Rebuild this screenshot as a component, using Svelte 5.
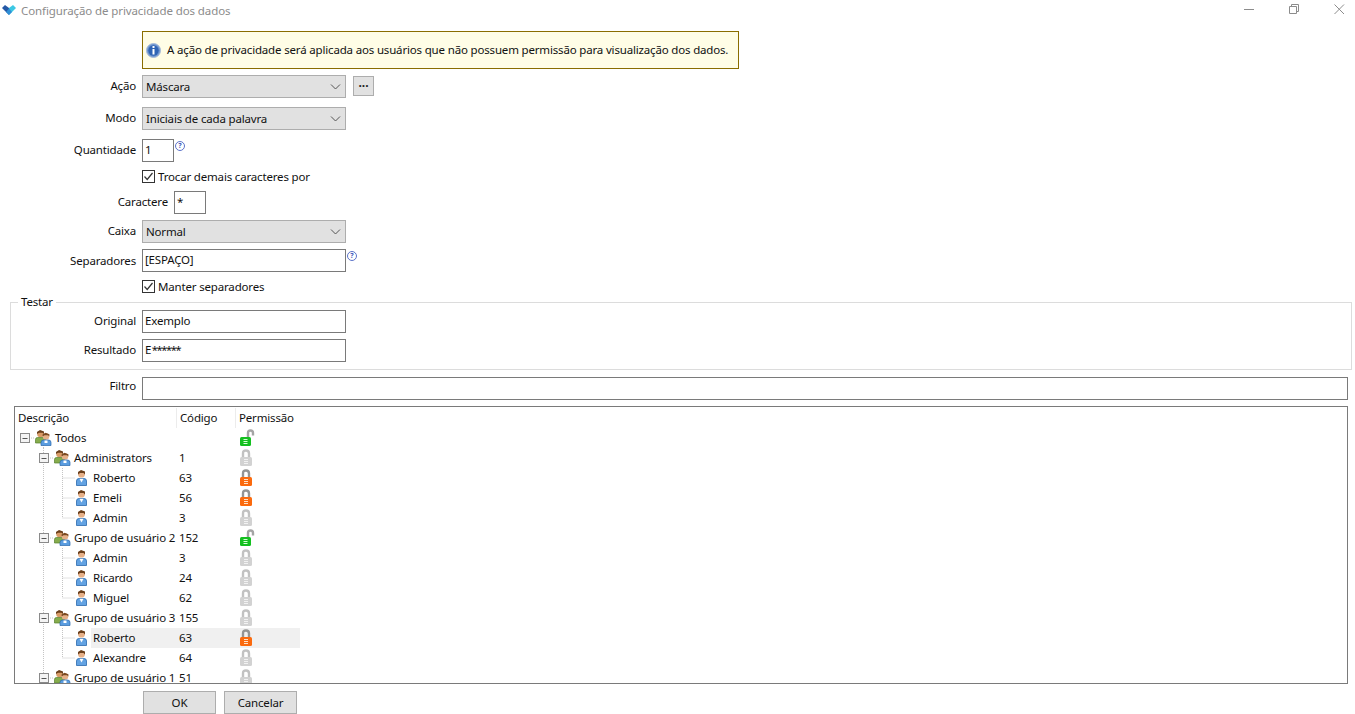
<script>
  const rows = [
    { level: 0, kind: 'group', name: 'Todos', code: '', lock: 'open', lines: [] },
    { level: 1, kind: 'group', name: 'Administrators', code: '1', lock: 'gray', lines: [43] },
    { level: 2, kind: 'user', name: 'Roberto', code: '63', lock: 'orange', lines: [43, 62] },
    { level: 2, kind: 'user', name: 'Emeli', code: '56', lock: 'orange', lines: [43, 62] },
    { level: 2, kind: 'user', name: 'Admin', code: '3', lock: 'gray', lines: [43], last: true },
    { level: 1, kind: 'group', name: 'Grupo de usuário 2', code: '152', lock: 'open', lines: [43] },
    { level: 2, kind: 'user', name: 'Admin', code: '3', lock: 'gray', lines: [43, 62] },
    { level: 2, kind: 'user', name: 'Ricardo', code: '24', lock: 'gray', lines: [43, 62] },
    { level: 2, kind: 'user', name: 'Miguel', code: '62', lock: 'gray', lines: [43], last: true },
    { level: 1, kind: 'group', name: 'Grupo de usuário 3', code: '155', lock: 'gray', lines: [43] },
    { level: 2, kind: 'user', name: 'Roberto', code: '63', lock: 'orange', lines: [43, 62], selected: true },
    { level: 2, kind: 'user', name: 'Alexandre', code: '64', lock: 'gray', lines: [43], last: true },
    { level: 1, kind: 'group', name: 'Grupo de usuário 1', code: '51', lock: 'gray', lines: [43] }
  ];
  const lockColors = {
    gray: ['#d2d2d2', '#f2f2f2', '#c2c2c2'],
    orange: ['#fb6a0e', '#ffe2c8', '#949494'],
    open: ['#14c020', '#d8ffd8', '#a4a4a4']
  };
</script>

<div class="window">
  <header class="titlebar">
    <svg class="logo" width="16" height="12" viewBox="0 0 16 12">
      <path d="M1 4 L4 1 L8 4 L8 11 Z" fill="#2458a6" />
      <path d="M8 4 L12 1 L15 4 L8 11 Z" fill="#3cc8e4" />
      <path d="M5 8 L8 4.5 L11 8 L8 11 Z" fill="#2f8fd6" />
    </svg>
    <span class="title">Configuração de privacidade dos dados</span>
    <div class="controls">
      <svg width="11" height="11" viewBox="0 0 11 11"><path d="M0 5.5H10" stroke="#8c8c8c" fill="none" /></svg>
      <svg width="11" height="11" viewBox="0 0 11 11"><path d="M.5 2.5H7.5V9.5H.5ZM2.5 2.5V.5H9.5V7.5H7.5" stroke="#8c8c8c" fill="none" /></svg>
      <svg width="11" height="11" viewBox="0 0 11 11"><path d="M.5 .5L10 10M10 .5L.5 10" stroke="#8c8c8c" fill="none" /></svg>
    </div>
  </header>

  <main class="content">
    <div class="notice">
      <svg width="15" height="15" viewBox="0 0 15 15">
        <circle cx="7.5" cy="7.5" r="7" fill="#6f96cf" stroke="#a9bcd8" />
        <circle cx="7.5" cy="7.5" r="5.2" fill="#2f64b4" />
        <rect x="6.5" y="3" width="2" height="2" fill="#fff" />
        <rect x="6.5" y="6" width="2" height="5.5" fill="#fff" />
      </svg>
      <span>A ação de privacidade será aplicada aos usuários que não possuem permissão para visualização dos dados.</span>
    </div>

    <div class="row r-acao">
      <label class="lbl">Ação</label>
      <div class="select"><span>Máscara</span><svg width="11" height="6" viewBox="0 0 11 6"><path d="M1 .5L5.5 5L10 .5" stroke="#555" fill="none" /></svg></div>
      <button class="dots">···</button>
    </div>
    <div class="row r-modo">
      <label class="lbl">Modo</label>
      <div class="select"><span>Iniciais de cada palavra</span><svg width="11" height="6" viewBox="0 0 11 6"><path d="M1 .5L5.5 5L10 .5" stroke="#555" fill="none" /></svg></div>
    </div>
    <div class="row r-qtd">
      <label class="lbl">Quantidade</label>
      <div class="input small">1</div>
      <span class="help">?</span>
    </div>
    <div class="check r-trocar">
      <span class="box"><svg width="13" height="13" viewBox="0 0 13 13"><path d="M2.5 6.5L5.2 9.5L10.5 3" stroke="#333" stroke-width="1.2" fill="none" /></svg></span>
      Trocar demais caracteres por
    </div>
    <div class="row r-car">
      <label class="lbl narrow">Caractere</label>
      <div class="input small">*</div>
    </div>
    <div class="row r-caixa">
      <label class="lbl">Caixa</label>
      <div class="select"><span>Normal</span><svg width="11" height="6" viewBox="0 0 11 6"><path d="M1 .5L5.5 5L10 .5" stroke="#555" fill="none" /></svg></div>
    </div>
    <div class="row r-sep">
      <label class="lbl">Separadores</label>
      <div class="input">[ESPAÇO]</div>
      <span class="help">?</span>
    </div>
    <div class="check r-manter">
      <span class="box"><svg width="13" height="13" viewBox="0 0 13 13"><path d="M2.5 6.5L5.2 9.5L10.5 3" stroke="#333" stroke-width="1.2" fill="none" /></svg></span>
      Manter separadores
    </div>

    <fieldset class="testar">
      <legend>Testar</legend>
      <div class="row t-orig">
        <label class="lbl inner">Original</label>
        <div class="input">Exemplo</div>
      </div>
      <div class="row t-res">
        <label class="lbl inner">Resultado</label>
        <div class="input">E<span class="mask">******</span></div>
      </div>
    </fieldset>

    <div class="row r-filtro">
      <label class="lbl">Filtro</label>
      <div class="input wide"></div>
    </div>

    <section class="tree">
      <div class="thead">
        <span class="th c-desc">Descrição</span>
        <span class="th c-code">Código</span>
        <span class="th c-perm">Permissão</span>
      </div>
      {#each rows as r}
        <div class="tr">
          <svg class="guides" width="100" height="20" viewBox="0 0 100 20">
            {#each r.lines as x}
              <path d="M{x - 14.5} 0V20" class="dot" />
            {/each}
            {#if r.last}
              <path d="M47.5 0V10" class="dot" />
            {/if}
            {#if r.level === 2}
              <path d="M47.5 10H60" class="dot" />
            {:else}
              <path d="M{r.level === 0 ? 14 : 33} 10H{r.level === 0 ? 20 : 39}" class="dot" />
              {#if r.level === 0}<path d="M28.5 15V20" class="dot" />{/if}
              <rect x={r.level === 0 ? 5.5 : 24.5} y="5.5" width="9" height="9" fill="#f4f4f4" stroke="#8a8a8a" />
              <path d="M{r.level === 0 ? 7.5 : 26.5} 10.5H{r.level === 0 ? 12.5 : 31.5}" stroke="#555" />
            {/if}
            {#if r.kind === 'group'}
              <g transform="translate({r.level === 0 ? 20 : 39} 2)">
                <circle cx="5.5" cy="4" r="3.3" fill="#d99a66" />
                <path d="M2 4V2L5 0L9 1.5V4L7.5 2.8H4Z" fill="#6b3f1c" />
                <path d="M.5 13V9.5Q.5 7.5 2.5 7.5H8.5Q10.5 7.5 10.5 9.5V13Z" fill="#86ac4c" stroke="#55802c" stroke-width=".7" />
                <circle cx="11" cy="6.5" r="3.2" fill="#e6b088" />
                <path d="M7.6 6.5V4.5L10.5 2.8L14.4 4.2V6.5L13 5.2H9.5Z" fill="#7a4a22" />
                <path d="M6 15.5V12.5Q6 10 8.5 10H13.5Q16 10 16 12.5V15.5Z" fill="#5b9de0" stroke="#2a68ad" stroke-width=".7" />
                <rect x="9.5" y="10.5" width="3" height="2.5" fill="#fff" />
              </g>
            {:else}
              <g transform="translate(61 2)">
                <circle cx="5.5" cy="4.2" r="3.4" fill="#e6b088" />
                <path d="M2 4.5V2L5 0L9 1.5V4.5L7.5 3H4Z" fill="#6b3f1c" />
                <path d="M.5 15.5V11Q.5 8.5 3 8.5H8Q10.5 8.5 10.5 11V15.5Z" fill="#62a2e2" stroke="#2a68ad" stroke-width=".8" />
                <path d="M3.5 8.8H7.5L5.5 12.5Z" fill="#fff" />
              </g>
            {/if}
          </svg>
          <div class="cells" class:selected={r.selected} class:l0={r.level === 0} class:l1={r.level === 1}>
            <span class="c-name">{r.name}</span>
            <span class="c-code">{r.code}</span>
            <span class="c-lock">
              <svg width="16" height="20" viewBox="0 0 16 20">
                {#if r.lock === 'open'}
                  <path d="M8 9V5Q8 2.5 10.5 2.5Q13 2.5 13 5V7.5" stroke={lockColors.open[2]} stroke-width="2.4" fill="none" />
                  <rect x="0" y="9" width="11" height="9" rx="1.5" fill={lockColors.open[0]} />
                  <path d="M3.5 11.5H7.5M3.5 13.5H7.5M3.5 15.5H7.5" stroke={lockColors.open[1]} />
                {:else}
                  <path d="M3 10V5.5Q3 2.5 6 2.5Q9 2.5 9 5.5V10" stroke={lockColors[r.lock][2]} stroke-width="2.4" fill="none" />
                  <rect x="0" y="9" width="12" height="9" rx="1.5" fill={lockColors[r.lock][0]} />
                  <path d="M4 11.5H8M4 13.5H8M4 15.5H8" stroke={lockColors[r.lock][1]} />
                {/if}
              </svg>
            </span>
          </div>
        </div>
      {/each}
    </section>

    <footer class="actions">
      <button class="btn">OK</button>
      <button class="btn">Cancelar</button>
    </footer>
  </main>
</div>

<style>
  :global(body) {
    margin: 0;
    background: #fff;
    overflow: hidden;
  }
  .window {
    width: 1355px;
    height: 714px;
    overflow: hidden;
    font: 11.5px/16px "Noto Sans", "Open Sans", sans-serif;
    letter-spacing: -0.17px;
    color: #111;
    background: #fff;
  }
  .titlebar {
    height: 22px;
    display: flex;
    align-items: center;
    padding-left: 1px;
  }
  .logo { margin-right: 4px; margin-top: -2px; }
  .title { color: #8c8c8c; letter-spacing: -0.1px; }
  .controls {
    margin-left: auto;
    display: flex;
    gap: 34px;
    padding-right: 10px;
    align-self: flex-start;
    margin-top: 4px;
  }
  .content { display: flex; flex-direction: column; }
  .notice {
    margin: 9px 0 0 142px;
    width: 597px;
    height: 38px;
    box-sizing: border-box;
    border: 1px solid #8a6d00;
    background: #fffde6;
    display: flex;
    align-items: center;
    gap: 6px;
    padding-left: 3px;
    white-space: nowrap;
  }
  .row { display: flex; align-items: flex-start; }
  .lbl {
    width: 136px;
    margin-right: 6px;
    text-align: right;
    line-height: 22px;
    flex: none;
  }
  .lbl.narrow { width: 168px; }
  .lbl.inner { width: 120px; }
  .select, .input {
    box-sizing: border-box;
    width: 204px;
    height: 23px;
    line-height: 19px;
    border: 1px solid #7a7a7a;
    padding: 0 2px;
    flex: none;
  }
  .mask { letter-spacing: -1.3px; margin-left: 0.5px; font-size: 11px; }
  .select {
    display: flex;
    align-items: center;
    justify-content: space-between;
    background: #e1e1e1;
    border-color: #adadad;
    padding: 0 4px 0 3px;
  }
  .input.small { width: 32px; }
  .input.wide { width: 1206px; }
  .dots {
    box-sizing: border-box;
    width: 21px;
    height: 20px;
    margin: 1px 0 0 7px;
    border: 1px solid #adadad;
    background: #e1e1e1;
    padding: 0;
    font: bold 12px/16px "Noto Sans", sans-serif;
    color: #222;
  }
  .help {
    box-sizing: border-box;
    width: 10px;
    height: 10px;
    margin: 2px 0 0 1px;
    border: 1px solid #5b73c9;
    border-radius: 50%;
    font-size: 7px;
    line-height: 8px;
    text-align: center;
    color: #3a55b8;
    font-weight: 700;
    letter-spacing: 0;
  }
  .check {
    display: flex;
    align-items: center;
    height: 13px;
    margin-left: 142px;
  }
  .box {
    box-sizing: border-box;
    width: 13px;
    height: 13px;
    border: 1px solid #333;
    margin-right: 3px;
    display: block;
    flex: none;
    position: relative;
  }
  .box svg { position: absolute; left: -1px; top: -1px; }

  .r-acao { margin-top: 6px; }
  .r-modo { margin-top: 9px; }
  .r-qtd { margin-top: 9px; }
  .r-trocar { margin-top: 8px; }
  .r-car { margin-top: 8px; }
  .r-caixa { margin-top: 6px; }
  .r-sep { margin-top: 6px; }
  .r-sep .lbl { line-height: 23px; }
  .r-manter { margin-top: 8px; }

  .testar {
    box-sizing: border-box;
    margin: 1px 3px 0 10px;
    width: 1342px;
    height: 76px;
    border: 1px solid #dcdcdc;
    padding: 0;
    min-inline-size: 0;
  }
  .testar legend {
    padding: 0 3px;
    margin-left: 7px;
    line-height: 16px;
  }
  .t-orig { margin-left: 5px; }
  .t-res { margin-top: 6px; margin-left: 5px; }
  .r-filtro { margin-top: 7px; }
  .r-filtro .lbl { line-height: 17px; }

  .tree {
    box-sizing: border-box;
    margin: 6px 0 0 14px;
    width: 1334px;
    height: 278px;
    border: 1px solid #7a7a7a;
    overflow: hidden;
    flex: none;
  }
  .thead {
    height: 21px;
    display: flex;
    align-items: center;
  }
  .th { display: block; height: 20px; line-height: 20px; padding-left: 3px; box-sizing: border-box; }
  .th.c-desc { width: 162px; border-right: 1px solid #ececec; }
  .th.c-code { width: 59px; border-right: 1px solid #ececec; }
  .tr {
    height: 20px;
    display: flex;
    position: relative;
  }
  .guides { position: absolute; left: 0; top: 0; }
  .dot { stroke: #c4c4c4; stroke-dasharray: 1 1; fill: none; }
  .cells {
    margin-left: 76px;
    width: 209px;
    height: 20px;
    display: flex;
    line-height: 20px;
  }
  .cells.selected { background: #f0f0f0; }
  .cells.l1 { margin-left: 57px; width: 228px; }
  .cells.l0 { margin-left: 38px; width: 247px; }
  .c-name { flex: 1; padding-left: 2px; white-space: nowrap; overflow: hidden; }
  .cells > .c-code { width: 61px; flex: none; }
  .c-lock { width: 60px; flex: none; display: block; }
  .c-lock svg { display: block; }

  .actions {
    display: flex;
    gap: 8px;
    margin: 7px 0 0 143px;
  }
  .btn {
    box-sizing: border-box;
    width: 73px;
    height: 23px;
    border: 1px solid #adadad;
    background: #e1e1e1;
    padding: 0;
    font: 11.5px/16px "Noto Sans", "Open Sans", sans-serif;
    letter-spacing: -0.17px;
    color: #111;
  }
</style>
